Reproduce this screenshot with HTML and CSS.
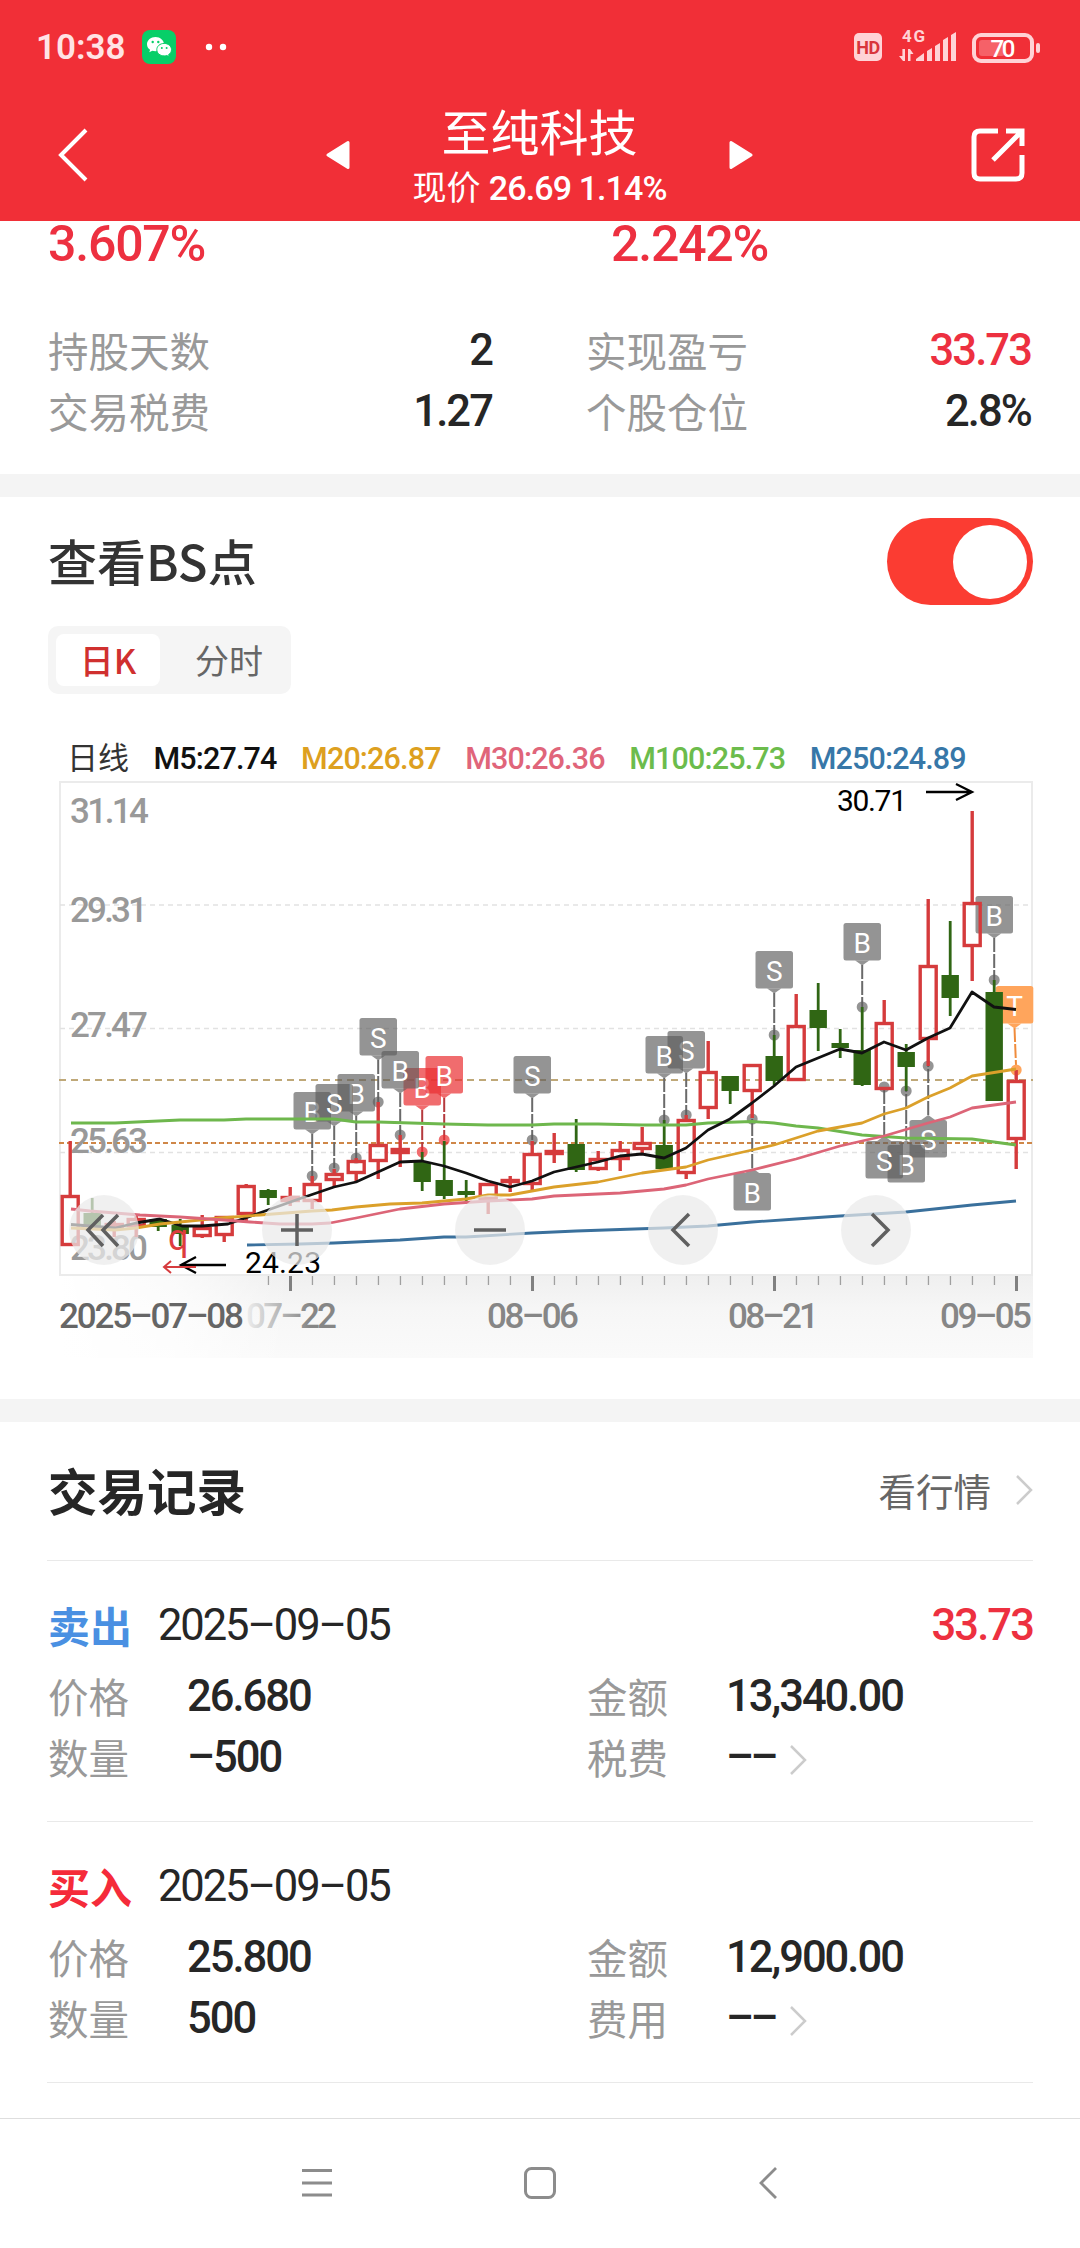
FILE: index.html
```html
<!DOCTYPE html>
<html lang="zh-CN">
<head>
    <meta charset="UTF-8">
    <meta name="viewport" content="width=device-width, initial-scale=1.0">
    <title>至纯科技</title>
    <link rel="stylesheet" href="styles.css">
</head>
<body>
    <header class="header">
        <div class="status-bar">
            <span class="time">10:38</span>
            <svg class="wechat" width="34" height="34" viewBox="0 0 34 34">
                <rect width="34" height="34" rx="8" fill="#07cf68"/>
                <path d="M13.500 7C8.800 7 5 10.200 5 14.200c0 2.300 1.200 4.200 3.100 5.500l-.8 2.500 3-1.500c1 .3 2 .5 3.200.5 4.700 0 8.500-3.100 8.500-7S18.200 7 13.500 7z" fill="#fff"/>
                <path d="M22.200 13.400c-4.200 0-7.400 2.800-7.400 6.300s3.200 6.200 7.400 6.200c.9 0 1.800-.1 2.600-.4l2.500 1.300-.7-2.200c1.800-1.200 2.900-2.900 2.900-4.900 0-3.500-3.200-6.300-7.300-6.300z" fill="#fff" stroke="#07cf68" stroke-width="1"/>
                <g fill="#07cf68">
                    <circle cx="10.700" cy="12" r="1.200"/><circle cx="16.300" cy="12" r="1.200"/>
                    <circle cx="19.800" cy="18" r="1"/><circle cx="24.600" cy="18" r="1"/>
                </g>
            </svg>
            <svg class="dots" width="22" height="8" viewBox="0 0 22 8" fill="#fff">
                <circle cx="4" cy="4" r="3.200"/><circle cx="18" cy="4" r="3.200"/>
            </svg>
            <span class="hd">HD</span>
            <svg class="signal" width="58" height="44" viewBox="0 -6 58 44" fill="#ffd3d6">
                <text x="3" y="13" class="net" textLength="23">4G</text>
                <path d="M6 20v12h-2l-4-5h3.400V20zM9 32V20h2l3.500 5H11.500v7z"/>
                <path d="M17 32v-2l8-6v8zM28 32V22l5-3v13zM36 32V17l5-3v18zM44 32V11l5-3v24zM52 32V6l5-3v29z"/>
            </svg>
            <svg class="battery" width="70" height="32" viewBox="0 0 70 32">
                <rect x="2" y="2" width="58" height="26" rx="7" fill="none" stroke="#ffd3d6" stroke-width="4"/>
                <rect x="7" y="7" width="26" height="16" rx="3" fill="#f66168"/>
                <rect x="64" y="10" width="4" height="10" rx="2" fill="#ffd3d6"/>
                <text x="18.500" y="23.500" class="level" textLength="25">70</text>
            </svg>
        </div>
        <div class="title-bar">
            <svg width="30" height="54" viewBox="0 0 30 54">
                <path d="M28 2 3 27l25 25" fill="none" stroke="#fff" stroke-width="4"/>
            </svg>
            <div class="stock">
                <svg width="24" height="30" viewBox="0 0 24 30"><path d="M22 2.500v25L2 15z" fill="#fff" stroke="#fff" stroke-width="3" stroke-linejoin="round"/></svg>
                <div class="stock-name">
                    <h1>至纯科技</h1>
                    <p>现价 <b>26.69 1.14%</b></p>
                </div>
                <svg width="24" height="30" viewBox="0 0 24 30"><path d="M2 2.500v25L22 15z" fill="#fff" stroke="#fff" stroke-width="3" stroke-linejoin="round"/></svg>
            </div>
            <svg width="54" height="54" viewBox="0 0 54 54" fill="none" stroke="#fff" stroke-width="5">
                <path d="M27 3H9Q3 3 3 9v36q0 6 6 6h36q6 0 6-6V27"/>
                <path d="M35 3h16v15M51 3 22 32"/>
            </svg>
        </div>
    </header>

    <section class="summary">
        <div class="rates">
            <span>3.607%</span>
            <span>2.242%</span>
        </div>
        <div class="stats">
            <div class="stat"><label>持股天数</label><b>2</b></div>
            <div class="stat"><label>实现盈亏</label><b class="up">33.73</b></div>
            <div class="stat"><label>交易税费</label><b>1.27</b></div>
            <div class="stat"><label>个股仓位</label><b>2.8%</b></div>
        </div>
    </section>

    <section class="bs">
        <div class="bs-head">
            <h2>查看BS点</h2>
            <div class="toggle"></div>
        </div>
        <div class="tabs">
            <span class="tab active">日K</span>
            <span class="tab">分时</span>
        </div>
        <div class="legend">
            <span class="day">日线</span>
            <span class="m5">M5:27.74</span>
            <span class="m20">M20:26.87</span>
            <span class="m30">M30:26.36</span>
            <span class="m100">M100:25.73</span>
            <span class="m250">M250:24.89</span>
        </div>
        <svg id="chart" class="chart" width="1080" height="623" viewBox="0 776 1080 623">
            <defs>
                <linearGradient id="band" x1="0" y1="0" x2="0" y2="1">
                    <stop offset="0" stop-color="#efefef"/>
                    <stop offset="0.400" stop-color="#f6f6f6"/>
                    <stop offset="1" stop-color="#fafafa"/>
                </linearGradient>
                <linearGradient id="fade" x1="0" y1="0" x2="1" y2="0">
                    <stop offset="0" stop-color="#fff"/>
                    <stop offset="0.500" stop-color="#fff" stop-opacity="0.700"/>
                    <stop offset="1" stop-color="#fff" stop-opacity="0"/>
                </linearGradient>
                <linearGradient id="dateFade" gradientUnits="userSpaceOnUse" x1="247" y1="0" x2="310" y2="0">
                    <stop offset="0" stop-color="#ececec"/>
                    <stop offset="1" stop-color="#868686"/>
                </linearGradient>
            </defs>
            <rect x="60" y="1275" width="973" height="83" fill="url(#band)"/>
            <rect x="60" y="1275" width="230" height="83" fill="url(#fade)"/>
            <rect x="60" y="782" width="972" height="493" fill="none" stroke="#ebebeb" stroke-width="2"/>
            <g stroke="#e2e2e2" stroke-width="1.300" stroke-dasharray="5 4">
                <path d="M60 905H1032M60 1028.500H1032M60 1152.500H1032"/>
            </g>
            <path d="M59 1080H1033" stroke="#bfa878" stroke-width="1.800" stroke-dasharray="7 5"/>
            <path d="M59 1143H1033" stroke="#cf8748" stroke-width="2" stroke-dasharray="5 3"/>
            <g class="price-axis">
                <text x="70" y="823" textLength="79">31.14</text>
                <text x="70" y="922" textLength="78">29.31</text>
                <text x="70" y="1037" textLength="78">27.47</text>
                <text x="70" y="1153" textLength="78">25.63</text>
                <text x="70" y="1260" textLength="78">23.80</text>
            </g>
            <g id="ticks"></g>
            <g class="date-axis">
                <text x="59" y="1328" textLength="185" class="first">2025–07–08</text>
                <text x="246" y="1328" textLength="91" fill="url(#dateFade)">07–22</text>
                <text x="487" y="1328" textLength="92">08–06</text>
                <text x="728" y="1328" textLength="91">08–21</text>
                <text x="940" y="1328" textLength="92">09–05</text>
            </g>
            <g id="marks"></g>
            <g id="candles"></g>
            <g id="lines"></g>
            <g fill="none" stroke="#000" stroke-width="2.300">
                <path d="M926 792h46M956 784l16 8-16 8"/>
                <path d="M226 1265h-45M196 1257l-15 8 15 8"/>
            </g>
            <path d="M196 1267h-32M171 1261l-7 6 7 6" fill="none" stroke="#d63c3e" stroke-width="2"/>
            <text x="168" y="1250" class="low-mark">q</text>
            <text x="837" y="811" class="peak" textLength="70">30.71</text>
            <text x="245" y="1273" class="peak" textLength="76">24.23</text>
            <g fill="#eaeaea" fill-opacity="0.720">
                <circle cx="104" cy="1230" r="35"/>
                <circle cx="297" cy="1230" r="35"/>
                <circle cx="490" cy="1230" r="35"/>
                <circle cx="683" cy="1230" r="35"/>
                <circle cx="876" cy="1230" r="35"/>
            </g>
            <g fill="none" stroke="#606060" stroke-width="3.500">
                <path d="m103 1215-15 15 15 16M118 1215l-15 15 15 16"/>
                <path d="M281 1230h32M297 1214v32"/>
                <path d="M474 1230h32"/>
                <path d="m689 1214-16 16 16 16"/>
                <path d="m872 1214 16 16-16 16"/>
            </g>
        </svg>
    </section>

    <section class="records">
        <div class="records-head">
            <h2>交易记录</h2>
            <a class="more">看行情
                <svg width="18" height="32" viewBox="0 0 18 32"><path d="m2 2 14 14L2 30" fill="none" stroke="#ccc" stroke-width="2.500"/></svg>
            </a>
        </div>
        <div class="record">
            <div class="record-title">
                <span class="side sell">卖出</span>
                <span class="date">2025–09–05</span>
                <b class="up">33.73</b>
            </div>
            <div class="fields">
                <div class="field"><label>价格</label><b>26.680</b></div>
                <div class="field"><label>金额</label><b>13,340.00</b></div>
                <div class="field"><label>数量</label><b>–500</b></div>
                <div class="field"><label>税费</label><b class="none">––</b>
                    <svg width="18" height="32" viewBox="0 0 18 32"><path d="m2 2 14 14L2 30" fill="none" stroke="#ccc" stroke-width="2.500"/></svg>
                </div>
            </div>
        </div>
        <div class="record">
            <div class="record-title">
                <span class="side buy">买入</span>
                <span class="date">2025–09–05</span>
            </div>
            <div class="fields">
                <div class="field"><label>价格</label><b>25.800</b></div>
                <div class="field"><label>金额</label><b>12,900.00</b></div>
                <div class="field"><label>数量</label><b>500</b></div>
                <div class="field"><label>费用</label><b class="none">––</b>
                    <svg width="18" height="32" viewBox="0 0 18 32"><path d="m2 2 14 14L2 30" fill="none" stroke="#ccc" stroke-width="2.500"/></svg>
                </div>
            </div>
        </div>
    </section>

    <nav class="nav">
        <svg width="32" height="32" viewBox="0 0 32 32"><path d="M1 3.500h30M1 16h30M1 28h30" stroke="#8c8c8c" stroke-width="3"/></svg>
        <svg width="32" height="32" viewBox="0 0 32 32"><rect x="1.500" y="1.500" width="29" height="29" rx="6" fill="none" stroke="#8c8c8c" stroke-width="3"/></svg>
        <svg class="nav-back" width="20" height="32" viewBox="0 0 20 32"><path d="M18 1 3 16l15 15" fill="none" stroke="#8c8c8c" stroke-width="2.800"/></svg>
    </nav>

    <script>
        const x = i => 70.2 + i * 22;

        // [type, high, body top, body bottom, low], r = up, g = down
        const candles = [
            ['r',1141,1195,1246,1246], ['g',1198,1213,1227,1230], ['r',1221,1223,1229,1237], ['r',1215,1218,1227,1237],
            ['g',1218,1219,1227,1231], ['g',1219,1225,1234,1246], ['r',1215,1227,1237,1238], ['r',1216,1216,1236,1242],
            ['r',1184,1185,1215,1223], ['g',1189,1190,1198,1205], ['r',1187,1196,1202,1206], ['r',1176,1183,1202,1209],
            ['r',1169,1173,1181,1187], ['r',1158,1160,1174,1182], ['r',1102,1144,1162,1179], ['r',1135,1148,1154,1167],
            ['g',1152,1162,1182,1191], ['g',1141,1180,1196,1199], ['g',1180,1191,1195,1202], ['r',1183,1183,1200,1214],
            ['r',1176,1179,1183,1192], ['r',1141,1153,1185,1190], ['r',1133,1150,1155,1163], ['g',1119,1144,1170,1172],
            ['r',1151,1158,1170,1171], ['r',1141,1149,1160,1171], ['r',1127,1142,1150,1153], ['g',1120,1145,1169,1171],
            ['r',1115,1119,1174,1179], ['r',1041,1071,1109,1119], ['g',1076,1076,1091,1104], ['r',1064,1064,1092,1118],
            ['g',1035,1056,1081,1085], ['r',994,1025,1081,1081], ['g',983,1010,1028,1051], ['g',1029,1043,1048,1058],
            ['g',1007,1050,1085,1086], ['r',1000,1022,1090,1090], ['g',1044,1052,1067,1091], ['r',899,965,1040,1066],
            ['g',921,975,998,1016], ['r',811,902,947,981], ['g',980,992,1101,1101], ['r',1070,1080,1140,1169]
        ];

        let html = '';
        candles.forEach(([type, high, top, bottom, low], i) => {
            const cx = x(i);
            if (type === 'r') {
                html += `<path class="up-line" d="M${cx} ${high}V${top}M${cx} ${bottom}V${low}"/>`;
                html += `<rect class="up-body" x="${cx - 8}" y="${top + 1.5}" width="16" height="${bottom - top - 3}"/>`;
            } else {
                html += `<path class="down-line" d="M${cx} ${high}V${low}"/>`;
                html += `<rect class="down-body" x="${cx - 8.7}" y="${top}" width="17.400" height="${bottom - top}"/>`;
            }
        });
        document.getElementById('candles').innerHTML = html;

        // moving averages
        const averages = {
            m250: '247,1245 300,1244 334,1243 400,1240 444,1237 466,1237 532,1233 576,1231 664,1228 708,1226 752,1222 796,1219 840,1216 906,1212 972,1205 1016,1201',
            m100: '71,1123 115,1123 180,1120 224,1120 246,1119 334,1119 356,1122 378,1122 444,1124 488,1125 532,1125 554,1124 598,1124 642,1125 686,1125 708,1123 752,1121.5 774,1123 796,1126 818,1128 862,1135 906,1138 972,1139 1016,1145',
            m5: '71,1224.5 115,1228 136,1223 160,1219 182,1226 202,1226 228,1224 268,1210 296,1200 334,1187 356,1182 378,1172 400,1162 422,1161 444,1166 466,1173 488,1181 510,1187 532,1181 554,1172 576,1167 598,1162 620,1156 642,1154 664,1158 686,1148 708,1130 730,1119 752,1103 774,1086 796,1067 840,1049 862,1053 884,1042 906,1050 928,1038 950,1028 972,992 994,1007 1016,1009.5',
            m20: '71,1228 115,1230 136,1228 160,1224 220,1218 260,1215 312,1211 332,1210 356,1207 390,1204 422,1203 466,1199 488,1195 510,1195 554,1187 598,1182 642,1173 686,1167 708,1160 730,1155 752,1150 774,1145 818,1131 862,1123 884,1114 906,1108 928,1097 950,1088 972,1076 1016,1069',
            m30: '71,1209 90,1211 140,1215 180,1217 224,1220 250,1222 280,1224 312,1224 330,1223 356,1218 400,1209 444,1204 488,1201 532,1199 554,1196 620,1193 664,1189 686,1185 708,1179 752,1170 796,1159 840,1146 884,1136 928,1123 950,1117 972,1108 1016,1102'
        };
        document.getElementById('lines').innerHTML = Object.keys(averages)
            .map(k => `<polyline class="ma ${k}" points="${averages[k]}"/>`).join('');

        // buy / sell tags: [candle, letter, tag top, dot y, kind]
        const marks = [
            [11,'B',1092,1176,'old'], [13,'B',1074,1158,'old'], [12,'S',1084,1168,'old'], [14,'S',1018,1102,'old'],
            [16,'B',1068,1152,'mine'], [15,'B',1051,1135,'old'], [17,'B',1056,1140,'mine'], [21,'S',1056,1140,'old'],
            [28,'S',1031,1115,'old'], [27,'B',1036,1120,'old'], [32,'S',951,1035,'old'], [36,'B',923,1007,'old'],
            [42,'B',896,980,'old'], [31,'B',1173,1119,'old'], [39,'S',1120,1066,'old'], [38,'B',1145,1091,'old'],
            [37,'S',1141,1087,'old'], [43,'T',986,1070,'today']
        ];
        document.getElementById('marks').innerHTML = marks.map(([i, letter, top, dot, kind]) => {
            const cx = x(i);
            const tx = kind === 'today' ? cx - 1.7 : cx;
            const below = dot < top;
            const from = below ? top - 5 : top + 42;
            const tip = below
                ? `M${tx - 7} ${top}L${tx} ${top - 5}L${tx + 7} ${top}z`
                : `M${tx - 7} ${top + 37.5}L${tx} ${top + 42.5}L${tx + 7} ${top + 37.5}z`;
            return `<g class="mark ${kind}">
                <path class="pole" d="M${tx} ${from}L${cx} ${dot}"/>
                <circle cx="${cx}" cy="${dot}" r="5.500"/>
                <rect x="${tx - 18.7}" y="${top}" width="37.500" height="37.500" rx="2.500"/>
                <path d="${tip}"/>
                <text x="${tx}" y="${top + 30}">${letter}</text>
            </g>`;
        }).join('');

        let ticks = '';
        for (let i = 9; i < 44; i++) {
            const major = i % 11 === 10;
            ticks += `<rect x="${x(i) - (major ? 1.2 : 0.4)}" y="1276" width="${major ? 3 : 1.3}" height="${major ? 15 : 9}" fill="${major ? '#808080' : '#a0a0a0'}"/>`;
        }
        document.getElementById('ticks').innerHTML = ticks;
    </script>
</body>
</html>
```
FILE: styles.css
```css
:root {
    --red: #f12f37;
    --up: #ed3040;
    --dark: #262626;
    --gray: #999;
}

* {
    margin: 0;
    padding: 0;
    box-sizing: border-box;
}

body {
    width: 1080px;
    height: 2248px;
    overflow: hidden;
    background: #fff;
    color: var(--dark);
    font-family: Roboto, "Noto Sans CJK SC", sans-serif;
}

svg {
    display: block;
    flex: none;
}

b {
    font-weight: 500;
}

.up {
    color: var(--up);
}

/* header */
.header {
    height: 221px;
    background: var(--red);
    color: #fff;
}

.status-bar {
    display: flex;
    align-items: center;
    height: 94px;
    padding: 0 39px 0 36px;
}

.time {
    width: 106px;
    font-size: 35px;
    font-weight: 600;
    color: #ffe3e5;
}

.dots {
    margin-left: 29px;
}

.hd {
    width: 28px;
    height: 28px;
    margin-left: auto;
    border-radius: 5px;
    background: #ffd3d6;
    color: #d9353c;
    font-size: 18px;
    font-weight: 700;
    line-height: 29px;
    text-align: center;
    letter-spacing: -0.5px;
}

.signal {
    margin: -5px 0 0 17px;
}

.net {
    font-size: 17px;
    font-weight: 700;
}

.battery {
    margin: 14px -1px 10px 15px;
}

.level {
    font-size: 24px;
    font-weight: 500;
    fill: #fff;
}

.title-bar {
    display: flex;
    justify-content: space-between;
    align-items: center;
    height: 122px;
    padding: 0 55px 0 58px;
}

.stock {
    display: flex;
    align-items: center;
    justify-content: space-between;
    width: 427px;
    margin-left: 20px;
}

.stock-name {
    padding-top: 5px;
    text-align: center;
}

.stock-name h1 {
    font-size: 49px;
    font-weight: 400;
    line-height: 60px;
}

.stock-name p {
    font-size: 34px;
    line-height: 46px;
    white-space: nowrap;
}

.stock-name b {
    letter-spacing: -0.9px;
}

/* summary */
.summary {
    height: 276px;
    padding: 1px 48px 0;
    border-bottom: 23px solid #f4f4f4;
}

.rates {
    display: grid;
    grid-template-columns: 563px 1fr;
    height: 44px;
    margin-bottom: 54px;
    color: var(--up);
    font-size: 50px;
    font-weight: 500;
    line-height: 44px;
    letter-spacing: -1.200px;
}

.stats {
    display: grid;
    grid-template-columns: 444px 445px;
    column-gap: 94px;
}

.stat,
.field {
    display: flex;
    align-items: center;
    height: 61px;
}

.stat {
    justify-content: space-between;
}

.stat label,
.field label {
    padding-top: 5px;
    color: var(--gray);
    font-size: 40.500px;
    line-height: 61px;
}

.stat b,
.field b,
.record-title b {
    font-size: 43.500px;
    letter-spacing: -1.900px;
}

.field b {
    letter-spacing: -2px;
}

.field b.none {
    letter-spacing: -3.500px;
}

.date {
    font-size: 43.500px;
    letter-spacing: -2.100px;
}

/* chart block */
.bs {
    height: 925px;
    padding-top: 21px;
    border-bottom: 23px solid #f4f4f4;
}

.bs-head {
    display: flex;
    justify-content: space-between;
    align-items: center;
    height: 87px;
    padding: 0 47px 0 48px;
}

.bs-head h2 {
    padding-bottom: 5px;
    color: #333;
    font-size: 49px;
    font-weight: 500;
    font-family: "Noto Sans CJK SC", sans-serif;
}

.toggle {
    display: flex;
    align-items: center;
    justify-content: flex-end;
    width: 146px;
    height: 87px;
    padding-right: 6px;
    border-radius: 44px;
    background: #fb3c32;
}

.toggle::after {
    content: '';
    width: 74px;
    height: 74px;
    border-radius: 50%;
    background: #fff;
}

.tabs {
    display: flex;
    width: 243px;
    height: 68px;
    margin: 21px 0 46px 48px;
    padding: 8px;
    border-radius: 10px;
    background: #f5f5f5;
}

.tab {
    flex: 1;
    padding-left: 15px;
    border-radius: 8px;
    color: #666;
    font-size: 34px;
    line-height: 52px;
    text-align: center;
    font-family: "Noto Sans CJK SC", sans-serif;
}

.tab.active {
    flex: none;
    width: 104px;
    padding: 0;
    background: #fff;
    color: #d0302f;
    font-weight: 500;
}

.legend {
    display: flex;
    align-items: center;
    height: 36px;
    padding-left: 67px;
    gap: 24.500px;
    font-size: 30.500px;
    font-weight: 500;
    letter-spacing: -0.850px;
}

.legend .day {
    padding-bottom: 5px;
    color: #333;
    font-size: 31px;
    font-weight: 400;
    letter-spacing: 0;
}

.legend .m5 { color: #111; }
.legend .m20 { color: #dda01f; }
.legend .m30 { color: #e0657a; }
.legend .m100 { color: #6cbc4c; }
.legend .m250 { color: #3777a8; }

.price-axis text,
.date-axis text {
    font-size: 35px;
    font-weight: 500;
}

.price-axis {
    fill: #999;
}

.date-axis {
    fill: #868686;
}

.date-axis .first {
    fill: #666;
}

.peak {
    font-size: 30px;
    fill: #000;
}

.low-mark {
    font-size: 36px;
    fill: #dd3c3e;
}

.up-line,
.up-body {
    fill: none;
    stroke: #d53b3c;
    stroke-width: 3.400;
}

.down-line {
    stroke: #306614;
    stroke-width: 2.800;
}

.down-body {
    fill: #306614;
}

.ma {
    fill: none;
    stroke-width: 2.800;
    stroke-linejoin: round;
}

.ma.m5 { stroke: #111; }
.ma.m20 { stroke: #dba02a; }
.ma.m30 { stroke: #dc6577; }
.ma.m100 { stroke: #6eb74d; }
.ma.m250 { stroke: #3a709c; }

.mark {
    fill: rgba(92, 92, 92, 0.660);
}

.mark.mine {
    fill: rgba(234, 45, 48, 0.700);
}

.mark.today {
    fill: #ffa55c;
}

.mark text {
    fill: #fff;
    font-size: 28px;
    text-anchor: middle;
}

.mark .pole {
    stroke: #6a6a6a;
    stroke-width: 2;
    stroke-dasharray: 14 2;
}

.mark.mine .pole {
    stroke: #b53a3e;
}

.mark.today .pole {
    stroke: #f08c3c;
}

/* trade records */
.records {
    padding: 0 47px;
}

.records-head {
    display: flex;
    justify-content: space-between;
    align-items: center;
    height: 139px;
    padding-bottom: 3px;
    border-bottom: 1px solid #e9e9e9;
}

.records-head h2 {
    padding-left: 1px;
    font-size: 49.500px;
    font-weight: 700;
}

.more {
    display: flex;
    align-items: center;
    gap: 24px;
    color: #666;
    font-size: 37.500px;
}

.record {
    padding: 29px 0 33px 1px;
    border-bottom: 1px solid #e9e9e9;
}

.record-title {
    display: flex;
    align-items: center;
    height: 70px;
    margin-bottom: 6px;
}

.record-title b {
    margin-left: auto;
}

.side {
    width: 110px;
    padding-bottom: 2px;
    font-size: 42px;
    font-weight: 700;
}

.sell { color: #4a90e2; }
.buy { color: #f52b3a; }

.fields {
    display: grid;
    grid-template-columns: 539px 1fr;
}

.field label {
    width: 139px;
}

.field svg {
    margin: 4px 0 0 14px;
}

/* system navigation */
.nav {
    display: flex;
    gap: 191px;
    height: 130px;
    margin-top: 35px;
    padding: 48px 0 0 301px;
    border-top: 1px solid #dedede;
}

.nav-back {
    margin-left: 11px;
}
```
